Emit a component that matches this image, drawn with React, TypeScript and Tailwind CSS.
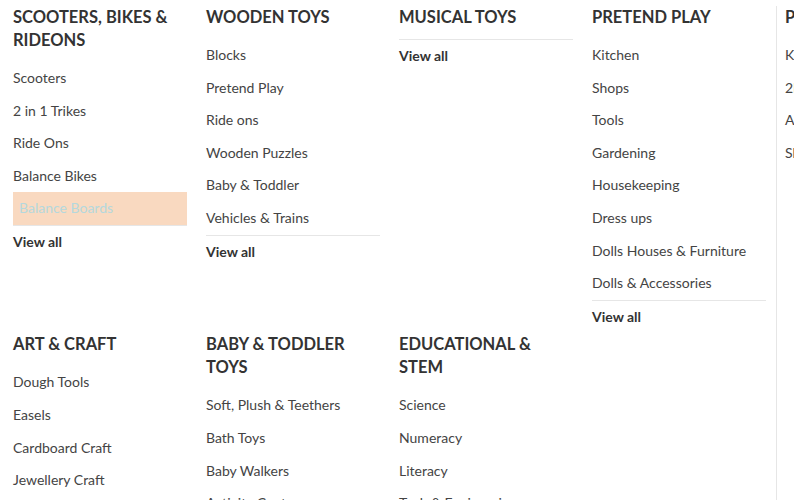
type Group = {
  title: string;
  items: string[];
  viewAll?: boolean;
  active?: string;
};

const rowOne: Group[] = [
  {
    title: "Scooters, Bikes & Rideons",
    items: ["Scooters", "2 in 1 Trikes", "Ride Ons", "Balance Bikes", "Balance Boards"],
    viewAll: true,
    active: "Balance Boards",
  },
  {
    title: "Wooden Toys",
    items: ["Blocks", "Pretend Play", "Ride ons", "Wooden Puzzles", "Baby & Toddler", "Vehicles & Trains"],
    viewAll: true,
  },
  { title: "Musical Toys", items: [], viewAll: true },
  {
    title: "Pretend Play",
    items: [
      "Kitchen",
      "Shops",
      "Tools",
      "Gardening",
      "Housekeeping",
      "Dress ups",
      "Dolls Houses & Furniture",
      "Dolls & Accessories",
    ],
    viewAll: true,
  },
];

const rowTwo: Group[] = [
  { title: "Art & Craft", items: ["Dough Tools", "Easels", "Cardboard Craft", "Jewellery Craft", "Painting"] },
  {
    title: "Baby & Toddler Toys",
    items: ["Soft, Plush & Teethers", "Bath Toys", "Baby Walkers", "Activity Centres"],
  },
  {
    title: "Educational & STEM",
    items: ["Science", "Numeracy", "Literacy", "Tech & Engineering"],
  },
];

const side: Group = {
  title: "Puzzles",
  items: ["Kids Jigsaws", "2D Puzzles", "Activity Puzzles", "Shape Sorters"],
};

function Column({ group }: { group: Group }) {
  return (
    <div className="pl-[13px] pr-[6px]">
      <h3 className="mb-[10px] text-[16.5px] font-bold uppercase leading-[23px] text-[#333]">{group.title}</h3>
      <ul>
        {group.items.map((item) => (
          <li key={item}>
            <a
              href="#"
              className={
                item === group.active
                  ? "block whitespace-nowrap bg-[#f9d9c0] py-[6px] pl-[6px] text-[14px] leading-[20.6px] text-[#b4d8dd]"
                  : "block whitespace-nowrap py-[6px] text-[14px] leading-[20.6px] text-[#444]"
              }
            >
              {item}
            </a>
          </li>
        ))}
      </ul>
      {group.viewAll && (
        <a
          href="#"
          className="block border-t border-[#e6e6e6] py-[6px] text-[14px] font-bold leading-[20.6px] text-[#333]"
        >
          View all
        </a>
      )}
    </div>
  );
}

export default function App() {
  return (
    <div
      className="flex h-[500px] w-[794px] overflow-hidden bg-white"
      style={{ fontFamily: "Lato, 'Open Sans', sans-serif" }}
    >
      <div className="w-[776px] shrink-0 pt-[6px]">
        <div className="grid grid-cols-[193px_193px_193px_193px]">
          {rowOne.map((g) => (
            <Column key={g.title} group={g} />
          ))}
          {rowTwo.map((g) => (
            <Column key={g.title} group={g} />
          ))}
        </div>
      </div>
      <div className="mt-[6px] w-[200px] shrink-0 border-l border-[#e6e6e6] pl-[8px]">
        <h3 className="mb-[10px] text-[16.5px] font-bold uppercase leading-[23px] text-[#333]">{side.title}</h3>
        <ul>
          {side.items.map((item) => (
            <li key={item}>
              <a href="#" className="block whitespace-nowrap py-[6px] text-[14px] leading-[20.6px] text-[#444]">
                {item}
              </a>
            </li>
          ))}
        </ul>
      </div>
    </div>
  );
}
